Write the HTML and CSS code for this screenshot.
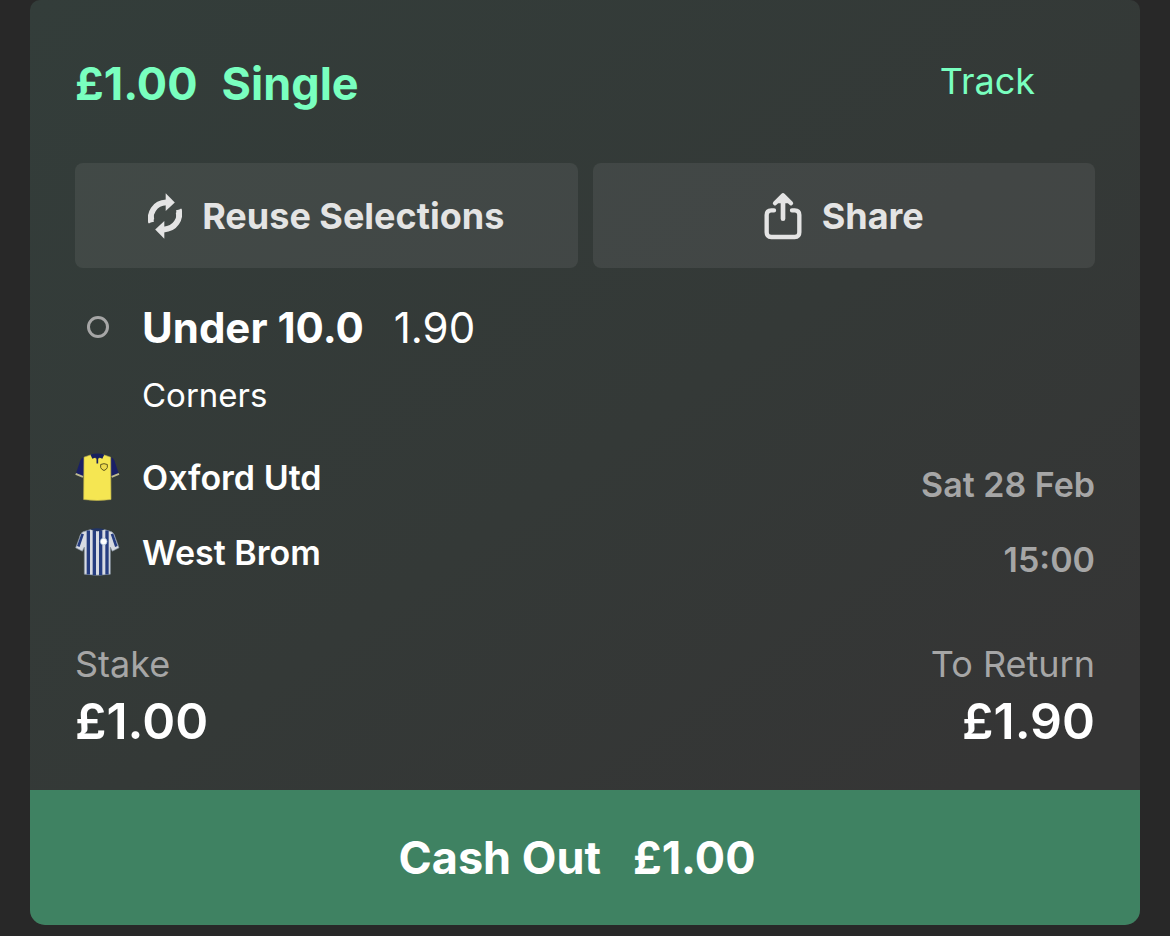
FILE: index.html
```html
<!DOCTYPE html>
<html lang="en">
<head>
  <meta charset="UTF-8" />
  <meta name="viewport" content="width=device-width, initial-scale=1.0" />
  <title>My Bets</title>
  <link rel="stylesheet" href="styles.css">
</head>
<body>
  <main class="bet">
    <div class="bet-body">
      <header class="bet-header">
        <h1 class="bet-title"><span>£1.00</span><span>Single</span></h1>
        <a class="track" href="#">Track</a>
      </header>

      <div class="actions">
        <button class="action" type="button">
          <svg class="icon-reuse" viewBox="0 0 100 136" aria-hidden="true">
            <g id="arrow">
              <path d="M9 87 C3 60 18 30 54 28" fill="none" stroke="currentColor" stroke-width="17" />
              <path d="M52 1 L79 28 L52 53 Z" fill="currentColor" />
              <path d="M2 91 L18 77 L16 64 L1 64 Z" fill="currentColor" />
            </g>
            <use href="#arrow" transform="rotate(180 50 68)" />
          </svg>
          Reuse Selections
        </button>
        <button class="action" type="button">
          <svg class="icon-share" viewBox="0 0 114 144" aria-hidden="true">
            <g fill="none" stroke="currentColor" stroke-width="13" stroke-linecap="round" stroke-linejoin="round">
              <path d="M30 55 H22 Q8 55 8 69 V121 Q8 135 22 135 H92 Q106 135 106 121 V69 Q106 55 92 55 H84" />
              <path d="M57 80 V12" stroke-width="14" />
              <path d="M33 34 L57 10 L81 34 Z" fill="currentColor" stroke="none" />
              <path d="M33 34 L57 10 L81 34" />
            </g>
          </svg>
          Share
        </button>
      </div>

      <section class="selection">
        <span class="status"></span>
        <div>
          <h2 class="pick">Under 10.0 <span class="odds">1.90</span></h2>
          <p class="market">Corners</p>
        </div>
      </section>

      <section class="fixture">
        <ul class="teams">
          <li class="team">
            <svg class="shirt" viewBox="0 0 135 155" aria-hidden="true">
              <path d="M47 8 L24 16 Q16 20 13 34 L2 66 L24 75 L32 56 L101 56 L110 75 L132 66 L121 34 Q118 20 110 16 L86 8 Z" fill="#191f66" />
              <path d="M2 65 L24 74 M132 65 L110 74" stroke="#bdb98f" stroke-width="6" />
              <path d="M27 15 L48 8 L67 22 L86 8 L107 15 L108 142 Q67 148 26 142 Z" fill="#f5e652" stroke="#bdb24d" stroke-width="2" />
              <path d="M46 7 Q67 1 88 7 L82 20 L67 14 L52 20 Z" fill="#17205f" />
              <path d="M67 13 V34" stroke="#17205f" stroke-width="5" />
              <path d="M77 37 Q87 32 97 37 V46 Q95 52 87 55 Q79 52 77 46 Z" fill="#eedb4c" stroke="#61591f" stroke-width="3" />
            </svg>
            Oxford Utd
          </li>
          <li class="team">
            <svg class="shirt" viewBox="0 0 135 155" aria-hidden="true">
              <path d="M47 7 L24 14 Q16 18 13 32 L2 62 L22 72 L28 60 V141 Q67 147 106 141 V60 L112 72 L132 62 L121 32 Q118 18 110 14 L88 7 Q67 15 47 7 Z" fill="#d8dbe2" stroke="#84919e" stroke-width="2" />
              <path d="M23 20 L10 58 M111 20 L124 58" stroke="#263d80" stroke-width="8" />
              <path d="M40 10 V142 M58 10 V144 M77 10 V144 M96 10 V142" stroke="#263d80" stroke-width="10" />
              <path d="M46 6 Q67 0 89 6 Q67 18 46 6 Z" fill="#213466" />
              <circle cx="86" cy="43" r="10" fill="#fff" stroke="#a6bdd4" stroke-width="2" />
            </svg>
            West Brom
          </li>
        </ul>
        <div class="kickoff">
          <span>Sat 28 Feb</span>
          <span>15:00</span>
        </div>
      </section>

      <dl class="totals">
        <div>
          <dt>Stake</dt>
          <dd>£1.00</dd>
        </div>
        <div class="to-return">
          <dt>To Return</dt>
          <dd>£1.90</dd>
        </div>
      </dl>
    </div>

    <button class="cash-out" type="button"><span>Cash Out</span><span>£1.00</span></button>
  </main>
</body>
</html>
```
FILE: styles.css
```css
* {
  box-sizing: border-box;
}
body {
  margin: 0;
  font-family: Inter, Roboto, sans-serif;
  background: #282828;
  color: #fff;
}
h1, h2, p, ul, dl, dd {
  margin: 0;
  padding: 0;
}
button {
  border: none;
  font-family: inherit;
  cursor: pointer;
}
.bet {
  margin: 0 30px;
  border-radius: 10px 10px 15px 15px;
  overflow: hidden;
  background: linear-gradient(145deg, #333d3a 0%, #343937 50%, #353535 85%);
}
.bet-body {
  padding: 56px 45px 39px;
}
.bet-header {
  display: flex;
  justify-content: space-between;
  align-items: flex-start;
  padding-right: 60px;
}
.bet-title {
  display: flex;
  gap: 24px;
  font-size: 45px;
  line-height: 56px;
  font-weight: 700;
  color: #79ffbf;
}
.track {
  font-size: 36px;
  line-height: 50px;
  color: #79ffbf;
  text-decoration: none;
}
.actions {
  display: flex;
  gap: 15px;
  margin-top: 51px;
}
.action {
  flex: 1;
  display: flex;
  align-items: center;
  justify-content: center;
  gap: 20px;
  height: 105px;
  border-radius: 8px;
  background: rgba(255, 255, 255, 0.07);
  color: #e4e4e4;
  font-size: 36px;
  font-weight: 700;
}
.icon-reuse {
  width: 34px;
  height: 46px;
}
.icon-share {
  width: 38px;
  height: 48px;
}
.selection {
  display: flex;
  gap: 22px;
  margin-top: 35px;
}
.status {
  width: 22px;
  height: 22px;
  margin: 13px 11px 0 12px;
  border: 3px solid #a6a6a6;
  border-radius: 50%;
}
.pick {
  font-size: 42px;
  line-height: 50px;
  font-weight: 700;
}
.odds {
  margin-left: 20px;
  font-weight: 400;
}
.market {
  margin-top: 22px;
  font-size: 33px;
  line-height: 40px;
}
.fixture {
  display: flex;
  justify-content: space-between;
  margin-top: 25px;
  font-size: 34px;
  line-height: 75px;
  font-weight: 600;
}
.teams {
  list-style: none;
}
.team {
  display: flex;
  align-items: center;
  gap: 22px;
}
.shirt {
  width: 45px;
  height: 52px;
}
.kickoff {
  display: flex;
  flex-direction: column;
  padding-top: 7px;
  text-align: right;
  color: #a6a6a6;
}
.totals {
  display: flex;
  justify-content: space-between;
  margin-top: 45px;
}
.totals dt {
  font-size: 36px;
  line-height: 44px;
  color: #a6a6a6;
}
.totals dd {
  margin-top: 5px;
  font-size: 50px;
  line-height: 60px;
  font-weight: 600;
}
.to-return {
  text-align: right;
}
.cash-out {
  display: flex;
  justify-content: center;
  align-items: center;
  gap: 32px;
  width: 100%;
  height: 135px;
  padding: 0 16px 0 0;
  background: #3f8262;
  color: #fff;
  font-size: 45px;
  font-weight: 700;
}
```
